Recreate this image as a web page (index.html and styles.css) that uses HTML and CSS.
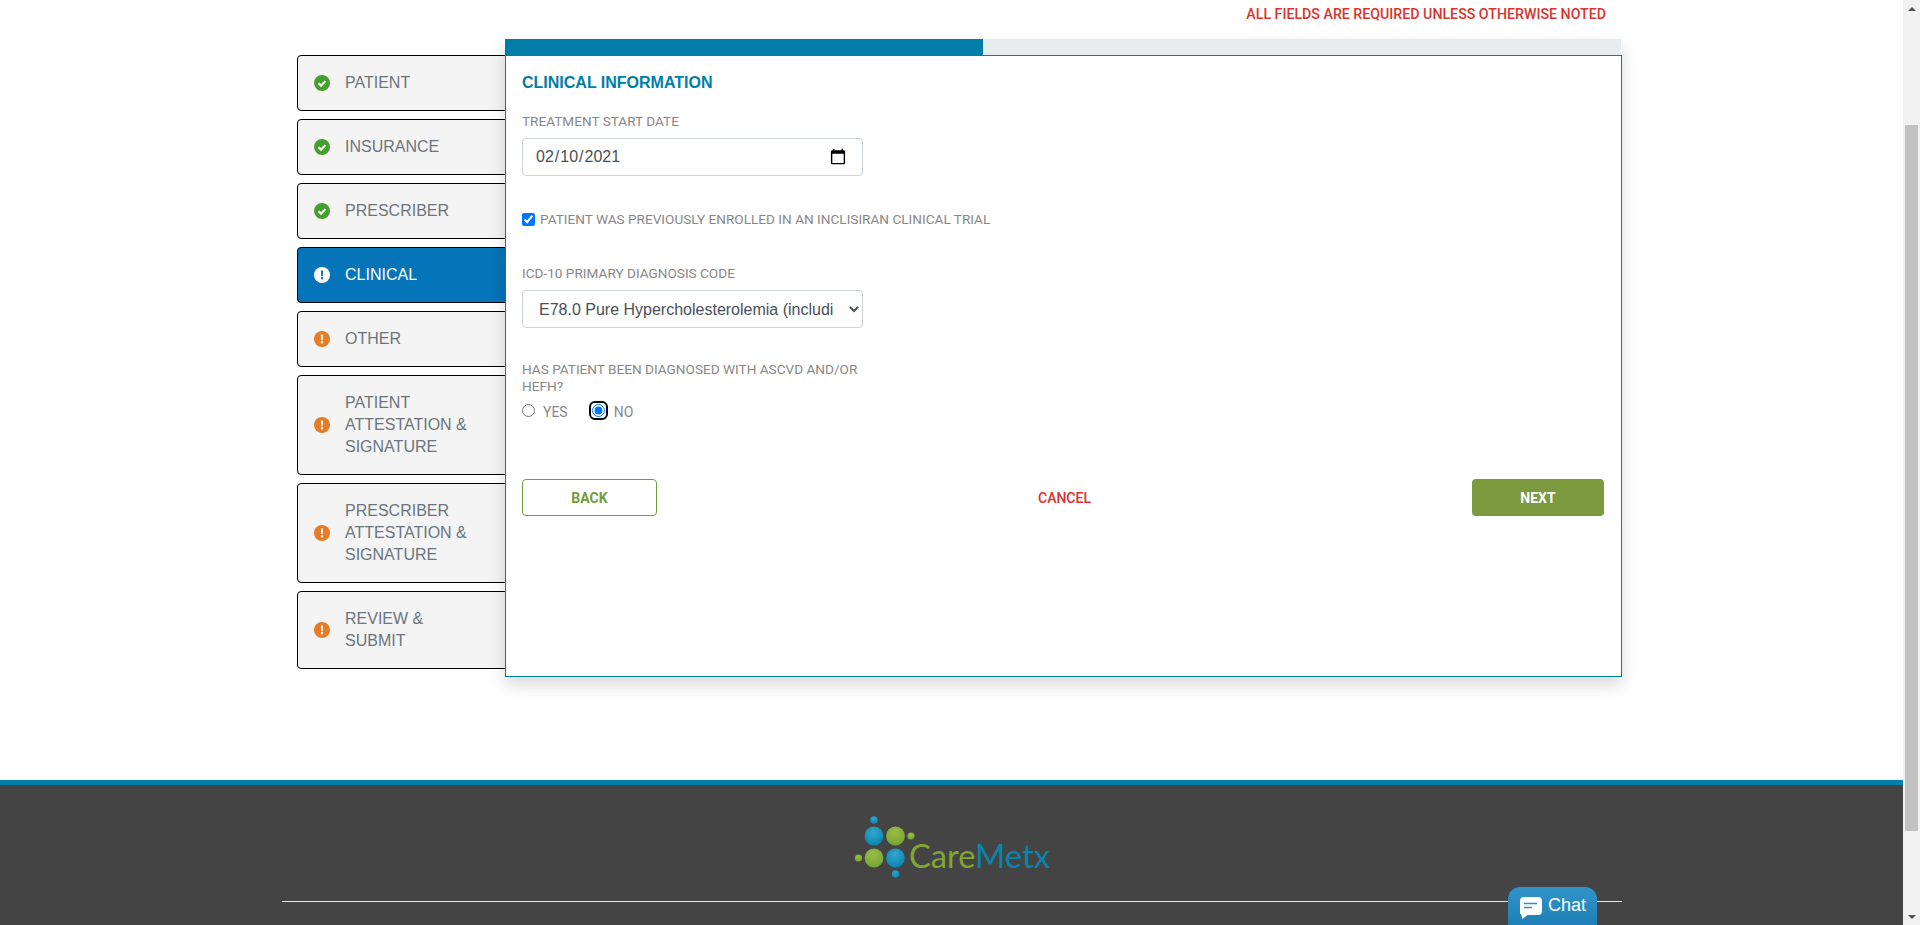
FILE: index.html
```html
<!DOCTYPE html>
<html lang="en">
<head>
<meta charset="utf-8">
<title>Clinical Information</title>
<link rel="stylesheet" href="styles.css">
</head>
<body>
<div class="viewport">
  <div class="page">
    <main class="content">
      <p class="required-note">ALL FIELDS ARE REQUIRED UNLESS OTHERWISE NOTED</p>
      <div class="wizard">
        <nav class="steps">
          <a class="step">
            <svg class="step-icon done" viewBox="0 0 16 16"><circle cx="8" cy="8" r="8"/><path class="glyph-line" d="M4.6 8.3l2.4 2.4 4.4-4.6"/></svg>
            <span>PATIENT</span>
          </a>
          <a class="step">
            <svg class="step-icon done" viewBox="0 0 16 16"><circle cx="8" cy="8" r="8"/><path class="glyph-line" d="M4.6 8.3l2.4 2.4 4.4-4.6"/></svg>
            <span>INSURANCE</span>
          </a>
          <a class="step">
            <svg class="step-icon done" viewBox="0 0 16 16"><circle cx="8" cy="8" r="8"/><path class="glyph-line" d="M4.6 8.3l2.4 2.4 4.4-4.6"/></svg>
            <span>PRESCRIBER</span>
          </a>
          <a class="step active">
            <svg class="step-icon current" viewBox="0 0 16 16"><circle cx="8" cy="8" r="8"/><path class="glyph-fill" d="M6.9 3.6h2.2l-.3 5.6H7.2zM8 10.1a1.2 1.2 0 1 1 0 2.4 1.2 1.2 0 0 1 0-2.4z"/></svg>
            <span>CLINICAL</span>
          </a>
          <a class="step">
            <svg class="step-icon todo" viewBox="0 0 16 16"><circle cx="8" cy="8" r="8"/><path class="glyph-fill" d="M6.9 3.6h2.2l-.3 5.6H7.2zM8 10.1a1.2 1.2 0 1 1 0 2.4 1.2 1.2 0 0 1 0-2.4z"/></svg>
            <span>OTHER</span>
          </a>
          <a class="step">
            <svg class="step-icon todo" viewBox="0 0 16 16"><circle cx="8" cy="8" r="8"/><path class="glyph-fill" d="M6.9 3.6h2.2l-.3 5.6H7.2zM8 10.1a1.2 1.2 0 1 1 0 2.4 1.2 1.2 0 0 1 0-2.4z"/></svg>
            <span>PATIENT ATTESTATION &amp; SIGNATURE</span>
          </a>
          <a class="step">
            <svg class="step-icon todo" viewBox="0 0 16 16"><circle cx="8" cy="8" r="8"/><path class="glyph-fill" d="M6.9 3.6h2.2l-.3 5.6H7.2zM8 10.1a1.2 1.2 0 1 1 0 2.4 1.2 1.2 0 0 1 0-2.4z"/></svg>
            <span>PRESCRIBER ATTESTATION &amp; SIGNATURE</span>
          </a>
          <a class="step">
            <svg class="step-icon todo" viewBox="0 0 16 16"><circle cx="8" cy="8" r="8"/><path class="glyph-fill" d="M6.9 3.6h2.2l-.3 5.6H7.2zM8 10.1a1.2 1.2 0 1 1 0 2.4 1.2 1.2 0 0 1 0-2.4z"/></svg>
            <span>REVIEW &amp; SUBMIT</span>
          </a>
        </nav>
        <section class="panel-wrap">
          <div class="progress"><div class="progress-bar"></div></div>
          <div class="panel">
            <h2 class="panel-title">CLINICAL INFORMATION</h2>
            <div class="field date-field">
              <label class="field-label" for="start">TREATMENT START DATE</label>
              <input class="control" id="start" type="date" value="2021-02-10">
            </div>
            <label class="check-row">
              <input type="checkbox" checked>
              <span>PATIENT WAS PREVIOUSLY ENROLLED IN AN INCLISIRAN CLINICAL TRIAL</span>
            </label>
            <div class="field code-field">
              <label class="field-label" for="code">ICD-10 PRIMARY DIAGNOSIS CODE</label>
              <select class="control" id="code">
                <option>E78.0 Pure Hypercholesterolemia (including familial hypercholesterolemia)</option>
              </select>
            </div>
            <div class="field dx-field">
              <p class="field-label">HAS PATIENT BEEN DIAGNOSED WITH ASCVD AND/OR HEFH?</p>
              <div class="radio-row">
                <label class="radio"><input type="radio" name="ascvd"><span class="radio-text">YES</span></label>
                <label class="radio"><span class="focus-ring"><input type="radio" name="ascvd" checked></span><span class="radio-text">NO</span></label>
              </div>
            </div>
            <div class="actions">
              <button class="btn btn-back" type="button">BACK</button>
              <button class="btn btn-cancel" type="button">CANCEL</button>
              <button class="btn btn-next" type="button">NEXT</button>
            </div>
          </div>
        </section>
      </div>
    </main>
    <footer class="footer">
      <svg class="logo" viewBox="0 0 196 62" width="196" height="62" role="img" aria-label="CareMetx">
        <defs>
          <radialGradient id="lb" cx="45%" cy="30%" r="75%"><stop offset="0" stop-color="#2fa6cc"/><stop offset="1" stop-color="#0a83ad"/></radialGradient>
          <radialGradient id="lg" cx="45%" cy="30%" r="75%"><stop offset="0" stop-color="#98bd48"/><stop offset="1" stop-color="#74a32f"/></radialGradient>
        </defs>
        <circle cx="20" cy="5" r="3.8" fill="url(#lb)"/>
        <circle cx="20" cy="21" r="9.4" fill="url(#lb)"/>
        <circle cx="41.5" cy="21" r="9.4" fill="url(#lg)"/>
        <circle cx="57" cy="21" r="3.6" fill="url(#lg)"/>
        <circle cx="4.5" cy="43" r="3.6" fill="url(#lg)"/>
        <circle cx="20" cy="43" r="9.4" fill="url(#lg)"/>
        <circle cx="41.5" cy="43" r="9.4" fill="url(#lb)"/>
        <circle cx="41.5" cy="59" r="3.8" fill="url(#lb)"/>
        <text class="logo-text" x="55" y="53" textLength="141" lengthAdjust="spacingAndGlyphs"><tspan class="logo-care">Care</tspan><tspan class="logo-metx">Metx</tspan></text>
      </svg>
      <div class="footer-rule"></div>
      <div class="chat">
        <svg class="chat-icon" viewBox="0 0 22 22" width="22" height="22"><path class="chat-bubble" d="M4 0h14a4 4 0 0 1 4 4v10a4 4 0 0 1-4 4H7.500L2.200 22 1.400 18A4 4 0 0 1 0 14V4a4 4 0 0 1 4-4z"/><path class="chat-lines" d="M4 6.500h13M4 10.500h8"/></svg>
        <span>Chat</span>
      </div>
    </footer>
  </div>
  <div class="scrollbar">
    <div class="arrow arrow-up"></div>
    <div class="track"><div class="thumb"></div></div>
    <div class="arrow arrow-down"></div>
  </div>
</div>
</body>
</html>
```

FILE: styles.css
```css
* { box-sizing: border-box; }

html, body {
  margin: 0;
  height: 100%;
  overflow: hidden;
  background: #fff;
  font-family: "Liberation Sans", Arial, sans-serif;
  color: #212529;
}

.viewport {
  display: flex;
  height: 925px;
}

.page {
  flex: 1;
  min-width: 0;
  display: flex;
  flex-direction: column;
}

/* main content */
.content {
  height: 780px;
  padding: 0 281px 0 297px;
}

.required-note {
  margin: 0;
  height: 39px;
  padding: 6px 16px 0 0;
  text-align: right;
  font-family: Roboto, sans-serif;
  font-size: 14.2px;
  line-height: 16px;
  font-weight: 500;
  color: #d9342b;
}

.wizard {
  display: flex;
  align-items: flex-start;
}

/* step list */
.steps {
  width: 224px;
  flex: none;
  margin: 16px -16px 0 0;
  display: flex;
  flex-direction: column;
  gap: 8px;
}

.step {
  display: flex;
  align-items: center;
  gap: 15px;
  padding: 16px 50px 16px 16px;
  border: 1px solid #000;
  border-radius: 4px;
  background: #f4f4f4;
  color: #6c757d;
  font-size: 16px;
  line-height: 22px;
}

.step.active {
  background: #0574b9;
  color: #fff;
}

.step-icon {
  width: 16px;
  height: 16px;
  flex: none;
}

.step-icon.done circle { fill: #46a02f; }
.step-icon.todo circle { fill: #e87b25; }
.step-icon.current circle { fill: #fff; }

.glyph-line {
  fill: none;
  stroke: #fff;
  stroke-width: 2;
}

.glyph-fill { fill: #fff; }
.current .glyph-fill { fill: #0574b9; }

/* panel */
.panel-wrap {
  width: 1117px;
  flex: none;
  position: relative;
  box-shadow: 0 8px 16px rgba(0, 0, 0, .15);
}

.progress {
  height: 16px;
  margin-right: 1px;
  background: #e9ecef;
}

.progress-bar {
  width: 42.86%;
  height: 100%;
  background: #007ea7;
}

.panel {
  height: 622px;
  border: 1px solid #007ea7;
  background: #fff;
  padding: 14px 17px 0 16px;
}

.panel-title {
  margin: 0;
  font-size: 16px;
  line-height: 26px;
  font-weight: 700;
  color: #007ea7;
}

.field {
  width: 341px;
}

.date-field { margin-top: 17px; }
.code-field { margin-top: 37px; }
.dx-field { margin-top: 33px; }

.field-label {
  display: block;
  margin: 0 0 8px;
  font-family: Roboto, sans-serif;
  font-size: 13.6px;
  line-height: 17px;
  color: #888;
}

.control {
  display: block;
  width: 100%;
  height: 38px;
  padding: 6px 12px;
  border: 1px solid #ced4da;
  border-radius: 4px;
  background-color: #fff;
  font-family: inherit;
  font-size: 16px;
  color: #495057;
}

.control::-webkit-calendar-picker-indicator {
  width: 18px;
  height: 18px;
  padding: 0;
  margin-right: 3px;
}

.check-row {
  display: flex;
  align-items: center;
  margin-top: 35px;
  font-family: Roboto, sans-serif;
  font-size: 13.6px;
  line-height: 17px;
  color: #888;
}

.check-row input {
  width: 13px;
  height: 13px;
  margin: 0 5px 0 0;
}

.radio-row {
  display: flex;
  align-items: center;
  gap: 24px;
  margin-top: -3px;
  height: 20px;
}

.radio {
  display: flex;
  align-items: center;
  font-family: Roboto, sans-serif;
  font-size: 14px;
  color: #888;
}

.radio input {
  width: 13px;
  height: 13px;
  margin: 0;
  display: block;
}

.radio-text {
  margin: 3px 0 0 8px;
}

.focus-ring {
  display: block;
  margin: -3px;
  padding: 1px;
  border: 2px solid #000;
  border-radius: 6px;
  background: #fff;
}

.focus-ring + .radio-text { margin-left: 9px; }

.actions {
  display: flex;
  justify-content: space-between;
  align-items: center;
  margin-top: 59px;
}

.btn {
  width: 135px;
  height: 37px;
  padding: 0;
  border: 1px solid transparent;
  border-radius: 4px;
  background: none;
  font-family: Roboto, sans-serif;
  font-size: 14px;
  font-weight: 700;
}

.btn-back {
  border-color: #769b3c;
  color: #769b3c;
}

.btn-cancel {
  color: #dc3030;
  font-weight: 500;
}

.btn-next {
  background: #7a9a3d;
  color: #fff;
  width: 132px;
}

/* footer */
.footer {
  flex: 1;
  position: relative;
  border-top: 5px solid #007ea7;
  background: #444;
  padding-top: 30px;
  display: flex;
  flex-direction: column;
  align-items: center;
}

.logo {
  display: block;
  overflow: visible;
}

.logo-text {
  font-family: Lato, Roboto, sans-serif;
  font-weight: 400;
  font-size: 32px;
}

.logo-care { fill: #7fa832; }
.logo-metx { fill: #0b84ad; }

.footer-rule {
  align-self: flex-start;
  width: 1340px;
  margin: 24px 0 0 282px;
  border-top: 1px solid #e6e6e6;
}

.chat {
  position: absolute;
  left: 1508px;
  top: 102px;
  width: 89px;
  height: 38px;
  display: flex;
  align-items: flex-start;
  gap: 6px;
  padding: 8px 0 0 12px;
  border-radius: 12px 12px 0 0;
  background: linear-gradient(#3094c8, #1f7fb8);
  color: #fff;
  font-size: 18px;
  line-height: 20px;
}

.chat-icon { flex: none; margin-top: 2px; }
.chat-bubble { fill: #fff; }
.chat-lines { fill: none; stroke: #2f8fc4; stroke-width: 1.6; }

/* window scrollbar */
.scrollbar {
  width: 17px;
  flex: none;
  display: flex;
  flex-direction: column;
  background: #f1f1f1;
}

.arrow {
  height: 17px;
  flex: none;
  display: flex;
  align-items: center;
  justify-content: center;
}

.arrow::before {
  content: "";
  border-left: 4px solid transparent;
  border-right: 4px solid transparent;
}

.arrow-up::before { border-bottom: 4px solid #505050; }
.arrow-down::before { border-top: 4px solid #505050; }

.track {
  flex: 1;
  padding: 108px 2px 77px;
}

.thumb {
  height: 100%;
  background: #c1c1c1;
}
```
